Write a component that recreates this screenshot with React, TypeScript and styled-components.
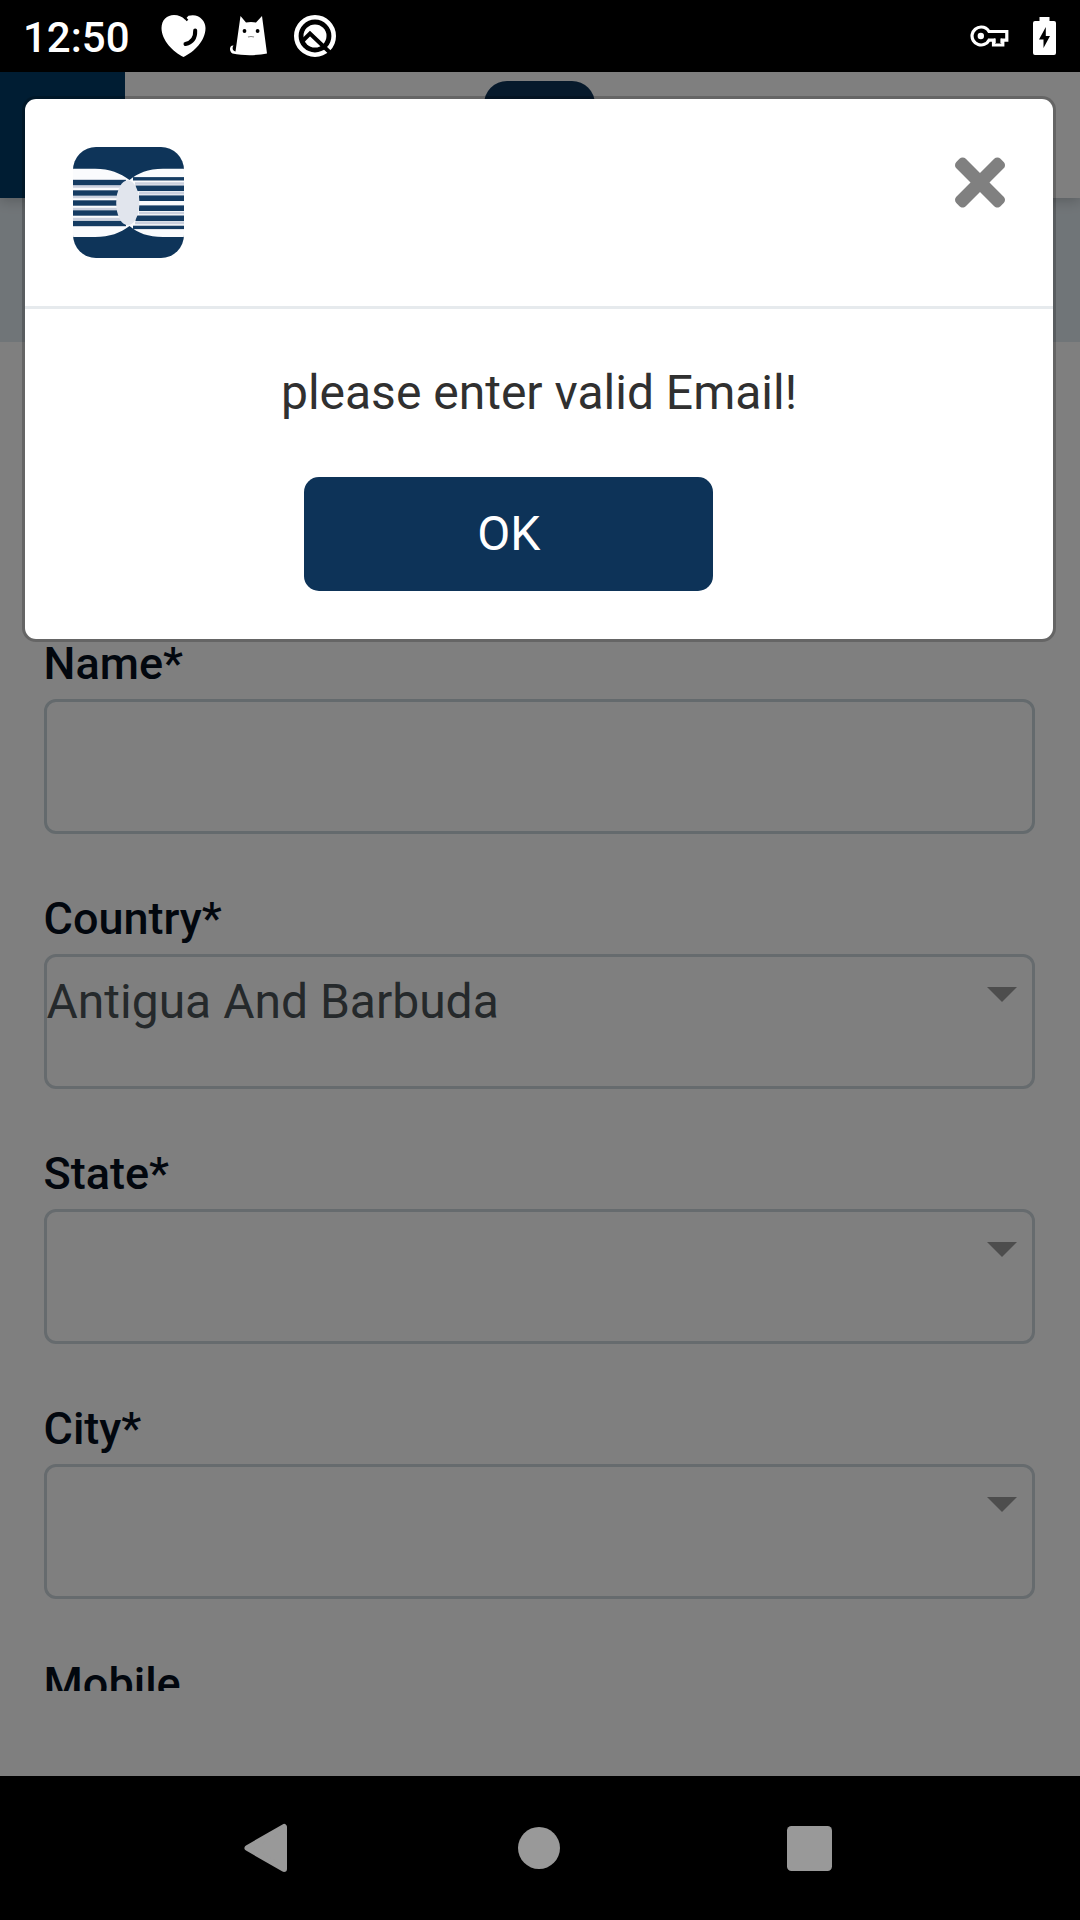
import React from "react";
import styled, { createGlobalStyle } from "styled-components";
import { FaTimes } from "react-icons/fa";

const GlobalStyle = createGlobalStyle`
  *, *::before, *::after { box-sizing: border-box; }
  body { margin: 0; background: #000; }
`;

const Screen = styled.div`
  display: flex;
  flex-direction: column;
  width: 1080px;
  height: 1920px;
  overflow: hidden;
  font-family: Roboto, "Liberation Sans", sans-serif;
`;

const StatusBar = styled.header`
  flex: none;
  display: flex;
  align-items: center;
  height: 72px;
  padding: 3px 24px 0 23px;
  background: #000;
  color: #fff;
`;

const Clock = styled.span`
  width: 137px;
  font-size: 42px;
  line-height: 50px;
  font-weight: 500;
`;

const StatusGroup = styled.div<{ $gap: number; $end?: boolean }>`
  display: flex;
  align-items: center;
  gap: ${(p) => p.$gap}px;
  margin-left: ${(p) => (p.$end ? "auto" : "0")};
  margin-top: -3px;
`;

const Viewport = styled.main`
  position: relative;
  flex: 1;
  min-height: 0;
  display: flex;
  flex-direction: column;
  background: #fff;
`;

const AppBar = styled.div`
  position: relative;
  flex: none;
  display: flex;
  height: 126px;
  background: #fff;
  box-shadow: 0 3px 12px rgba(0, 0, 0, 0.2);
`;

const MenuBlock = styled.div`
  width: 124.5px;
  background: #003b66;
`;

const BrandSlot = styled.div`
  flex: 1;
  padding: 9px 0 0 359px;
`;

const TitleBand = styled.div`
  flex: none;
  height: 144px;
  background: #e1eaf0;
`;

const Form = styled.form`
  flex: none;
  display: flex;
  flex-direction: column;
  gap: 58px;
  height: 1349px;
  padding: 295px 45px 0 43.5px;
  overflow: hidden;
`;

const Field = styled.div`
  flex: none;
  display: flex;
  flex-direction: column;
  gap: 8px;
`;

const Label = styled.label`
  font-size: 45px;
  line-height: 54px;
  font-weight: 500;
  color: #040e1c;
`;

const Control = styled.div<{ $select: boolean }>`
  display: flex;
  justify-content: space-between;
  align-items: flex-start;
  height: 135px;
  padding: 17px 15px 0 0;
  border: 3px solid ${(p) => (p.$select ? "#cdd6dc" : "#c8d4da")};
  border-radius: 12px;
`;

const Value = styled.span`
  font-size: 48px;
  line-height: 56px;
  color: #4a5257;
`;

const Caret = styled.span`
  margin-top: 13px;
  border: 15px solid transparent;
  border-top-color: #9a9a9a;
  border-bottom-width: 0;
`;

const Backdrop = styled.div`
  position: absolute;
  inset: 0;
  padding: 24px 24px 0 22px;
  background: rgba(0, 0, 0, 0.5);
`;

const Dialog = styled.section`
  border: 3px solid rgba(0, 0, 0, 0.2);
  border-radius: 14px;
  background: #fff;
  background-clip: padding-box;
`;

const DialogHead = styled.div`
  display: flex;
  justify-content: space-between;
  align-items: flex-start;
  height: 210px;
  padding: 48px 48px 48px 48.4px;
  border-bottom: 3px solid #e6eaed;
`;

const CloseButton = styled.button`
  display: flex;
  justify-content: center;
  width: 50px;
  margin-top: -1px;
  padding: 0;
  border: 0;
  background: none;
  color: #808080;
`;

const DialogBody = styled.div`
  display: flex;
  flex-direction: column;
  gap: 48px;
  padding: 48px;
`;

const Message = styled.p`
  margin: 0;
  font-size: 48px;
  line-height: 72px;
  text-align: center;
  color: #303030;
`;

const OkButton = styled.button`
  width: 409px;
  height: 114px;
  margin-left: 231.4px;
  padding: 0;
  border: 0;
  border-radius: 15px;
  background: #0d3358;
  color: #fff;
  font: 400 48px/72px Roboto, "Liberation Sans", sans-serif;
`;

const NavBar = styled.nav`
  flex: none;
  display: flex;
  align-items: center;
  gap: 227px;
  height: 144px;
  padding-left: 243px;
  background: #000;
`;

const leftStripes = [
  [35.5, 53], [46, 46], [56, 44], [66, 46], [76.5, 53],
];
const rightStripes = [
  [31.8, 60, 3.4], [41.3, 62.5, 5.6], [51.2, 66, 5.6], [61.2, 66, 5.6], [71.3, 62.5, 5.6], [80.4, 60, 3.4],
];

const BrandLogo = ({ id }: { id: string }) => (
  <svg width="111" height="111" viewBox="0 0 111 111" style={{ display: "block" }}>
    <clipPath id={id}>
      <rect width="111" height="111" rx="23" />
    </clipPath>
    <g clipPath={`url(#${id})`}>
      <rect width="111" height="111" fill="#0e3459" />
      <path d="M0 21.8H22C37 22 47 26 56.500 33C65 26 75 22 90 21.8H111V90H90C75 90 65 86 56.500 79C47 86 37 90 22 90H0Z" fill="#fafbfd" />
      <path d="M0 39.5H50M0 50H45M0 62H45M0 72H50M62 36.5H111M66 46.3H111M66 66H111M62 76H111" stroke="#cbd1df" strokeWidth="2.6" />
      {leftStripes.map(([y, end]) => (
        <rect key={y} x="0" y={y - 2.7} width={end} height="5.4" fill="#143b62" />
      ))}
      {rightStripes.map(([y, start, h]) => (
        <rect key={y} x={start} y={y - h / 2} width={111 - start} height={h} fill="#143b62" />
      ))}
      <ellipse cx="54.8" cy="55.8" rx="11.6" ry="22.5" fill="#e1e5ed" />
    </g>
  </svg>
);

const HeartIcon = () => (
  <svg width="46" height="44" viewBox="0 0 46 44">
    <path d="M23.5 43C13 38 1.5 26 1.5 14C1.5 6 7 1 14 1C18.500 1 22 2.500 25 5.500L28.500 1.800C38 -1 45.500 6 45.500 14C45.500 27 34 38 23.500 43Z" fill="#fff" />
    <path d="M22.500 1L27.500 6.500" stroke="#000" strokeWidth="2.200" />
    <path d="M35.200 16.500C35.500 24 32 28.500 25.500 30" fill="none" stroke="#000" strokeWidth="4" strokeLinecap="round" />
  </svg>
);

const CatIcon = () => (
  <svg width="41" height="42" viewBox="0 0 41 42">
    <path d="M11.500 1L17 7.500C20 6.800 24 6.800 27 7.500L33 1L38 38.500C29 40.500 15 41 3.500 38.500C0 37 0 30 4.500 30.500C2.800 32.500 3.500 36 6.500 36.500Z" fill="#fff" />
    <circle cx="15.500" cy="16" r="1.900" fill="#000" />
    <circle cx="28.600" cy="16" r="1.900" fill="#000" />
    <path d="M19 22Q22 21 25 22" fill="none" stroke="#888" strokeWidth="1.200" />
  </svg>
);

const RadarIcon = () => (
  <svg width="44" height="44" viewBox="0 0 44 44">
    <circle cx="22" cy="22" r="18.700" fill="none" stroke="#fff" strokeWidth="4.600" />
    <circle cx="22" cy="22" r="11.500" fill="#fff" />
    <path d="M9.500 27L17 19.500L39 40.500" fill="none" stroke="#000" strokeWidth="4" />
  </svg>
);

const KeyIcon = () => (
  <svg width="39" height="22" viewBox="0 0 39 22">
    <path d="M11 2A9 9 0 1 0 19 15.200H23.500V20H32.800V15.200H36.800V6.500H19A9 9 0 0 0 11 2Z" fill="none" stroke="#fff" strokeWidth="3.200" />
    <circle cx="10.800" cy="11" r="3.200" fill="#fff" />
    <path d="M24.800 13.500V18M31.300 13.500V18" stroke="#fff" strokeWidth="1.800" />
  </svg>
);

const BatteryIcon = () => (
  <svg width="23" height="40" viewBox="0 0 23 40">
    <path d="M6.500 1H16.500V5H21Q23 5 23 7V37Q23 39 21 39H2Q0 39 0 37V7Q0 5 2 5H6.500Z" fill="#fff" />
    <path d="M12.800 11L6 23.500H10.500V32L17 20H12.800Z" fill="#000" />
  </svg>
);

const BackIcon = () => (
  <svg width="48" height="50" viewBox="0 0 48 50">
    <path d="M4.500 25L41 4V46Z" fill="#999" stroke="#999" strokeWidth="6" strokeLinejoin="round" />
  </svg>
);

const HomeShape = styled.span`
  width: 42px;
  height: 42px;
  border-radius: 50%;
  background: #999;
`;

const RecentShape = styled.span`
  width: 45px;
  height: 45px;
  border-radius: 4.5px;
  background: #999;
`;

const fields = [
  { label: "Name*", value: "", select: false },
  { label: "Country*", value: "Antigua And Barbuda", select: true },
  { label: "State*", value: "", select: true },
  { label: "City*", value: "", select: true },
];

export default function App() {
  return (
    <Screen>
      <GlobalStyle />
      <StatusBar>
        <Clock>12:50</Clock>
        <StatusGroup $gap={23}>
          <HeartIcon />
          <CatIcon />
          <RadarIcon />
        </StatusGroup>
        <StatusGroup $gap={24} $end>
          <KeyIcon />
          <BatteryIcon />
        </StatusGroup>
      </StatusBar>
      <Viewport>
        <AppBar>
          <MenuBlock />
          <BrandSlot>
            <BrandLogo id="bar-logo" />
          </BrandSlot>
        </AppBar>
        <TitleBand />
        <Form>
          {fields.map((f) => (
            <Field key={f.label}>
              <Label>{f.label}</Label>
              <Control $select={f.select}>
                <Value>{f.value}</Value>
                {f.select && <Caret />}
              </Control>
            </Field>
          ))}
          <Field>
            <Label>Mobile</Label>
          </Field>
        </Form>
        <Backdrop>
          <Dialog>
            <DialogHead>
              <BrandLogo id="dialog-logo" />
              <CloseButton aria-label="Close">
                <FaTimes size={73} />
              </CloseButton>
            </DialogHead>
            <DialogBody>
              <Message>please enter valid Email!</Message>
              <OkButton>OK</OkButton>
            </DialogBody>
          </Dialog>
        </Backdrop>
      </Viewport>
      <NavBar>
        <BackIcon />
        <HomeShape />
        <RecentShape />
      </NavBar>
    </Screen>
  );
}
